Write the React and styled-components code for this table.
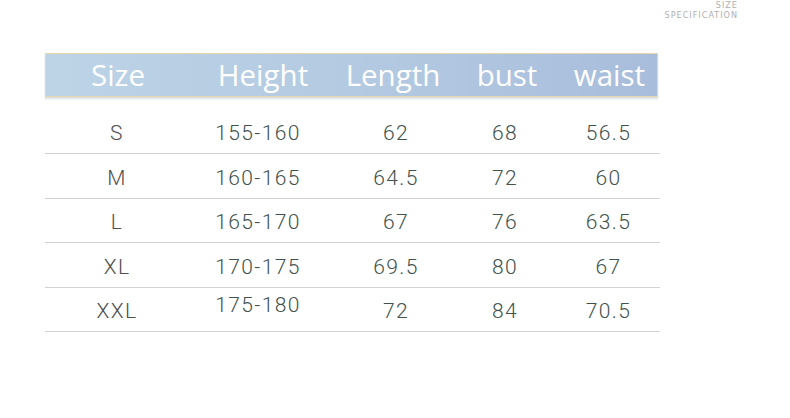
import React from 'react';
import styled, { createGlobalStyle } from 'styled-components';

const GlobalStyle = createGlobalStyle`
  html, body {
    margin: 0;
    padding: 0;
    background: #ffffff;
  }
`;

const Page = styled.div`
  width: 790px;
  height: 418px;
  background: #fff;
  overflow: hidden;
`;

const Caption = styled.div`
  display: flex;
  flex-direction: column;
  align-items: flex-end;
  padding: 0 52px 0 0;
  height: 20px;
  font-family: "Liberation Sans Narrow", "DejaVu Sans Condensed", "Liberation Sans", sans-serif;
  font-size: 9px;
  line-height: 10px;
  letter-spacing: 1px;
  color: #b0b0b0;
`;

const Table = styled.div`
  margin: 33px 0 0 45px;
  width: 615px;
`;

// centres: 117, 259, 396, 505, 609
const cols = '144px 140px 134px 84px 113px';

const HeadRow = styled.div`
  display: grid;
  grid-template-columns: ${cols};
  height: 42px;
  align-items: center;
  background: linear-gradient(90deg, #bdd3e6 0%, #b3c9e1 55%, #a8bddb 100%);
  border: 1px solid #e6d6ad;
  box-shadow: 0 2px 2px rgba(150, 160, 170, 0.35);
  margin-right: 2px;
`;

const HeadCell = styled.div`
  text-align: center;
  font-family: "Open Sans", "Noto Sans", sans-serif;
  font-size: 29.5px;
  color: #ffffff;
  transform: translate(${p => p.$dx || 0}px, -1px);
`;

const Body = styled.div`
  padding-top: 12.5px;
`;

const Row = styled.div`
  display: grid;
  grid-template-columns: ${cols};
  height: 43.5px;
  align-items: center;
  border-bottom: 1px solid #d2d2d2;
`;

const Cell = styled.div`
  text-align: center;
  font-family: Roboto, "Liberation Sans", sans-serif;
  font-weight: 300;
  font-size: 21px;
  letter-spacing: 1.4px;
  color: ${p => (p.$size ? '#4f4f4f' : '#41524d')};
  transform: translate(${p => p.$dx || 0}px, ${p => p.$dy || 2}px);
`;

const head = [
  { t: 'Size', dx: 0 },
  { t: 'Height', dx: 3 },
  { t: 'Length', dx: -4 },
  { t: 'bust', dx: 1 },
  { t: 'waist', dx: 5 },
];

const bodyDx = [0, -1, 0, 0, 5];

const rows = [
  ['S', '155-160', '62', '68', '56.5'],
  ['M', '160-165', '64.5', '72', '60'],
  ['L', '165-170', '67', '76', '63.5'],
  ['XL', '170-175', '69.5', '80', '67'],
  ['XXL', '175-180', '72', '84', '70.5'],
];

const App = () => {
  return (
    <Page>
      <GlobalStyle />
      <Caption>
        <span>SIZE</span>
        <span>SPECIFICATION</span>
      </Caption>
      <Table>
        <HeadRow>
          {head.map(h => (
            <HeadCell key={h.t} $dx={h.dx}>{h.t}</HeadCell>
          ))}
        </HeadRow>
        <Body>
          {rows.map(r => (
            <Row key={r[0]}>
              {r.map((v, i) => (
                <Cell
                  key={i}
                  $size={i === 0}
                  $dx={bodyDx[i]}
                  $dy={v === '175-180' ? -4 : 2}
                >
                  {v}
                </Cell>
              ))}
            </Row>
          ))}
        </Body>
      </Table>
    </Page>
  );
};

export default App;
